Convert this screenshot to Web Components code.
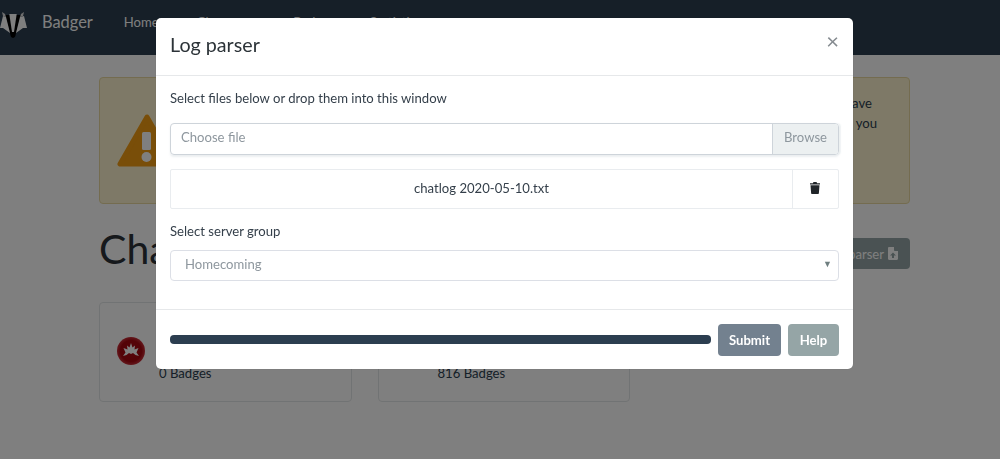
<!DOCTYPE html>
<html>
<head>
<meta charset="utf-8">
<title>Badger</title>
<style>
    html, body { margin: 0; height: 100%; overflow: hidden; background: #fff; }
    body { font-family: Lato, "Liberation Sans", sans-serif; font-size: 13.125px; color: #212529; }
</style>
</head>
<body>
<badger-page></badger-page>
<log-parser-modal></log-parser-modal>

<script>
class BadgerNav extends HTMLElement {
    constructor() {
        super()
        this.attachShadow({ mode: 'open' });
    }
    connectedCallback() {
        this.shadowRoot.innerHTML = `
        <style>
            :host { display: flex; align-items: flex-start; height: 55px; box-sizing: border-box; padding-top: 12px; background: #2c3e50; color: #fff; }
            svg { width: 28px; height: 26px; flex: none; }
            .brand { font-size: 16.4px; line-height: 20px; margin-left: 14px; margin-right: 31px; }
            a { line-height: 20px; color: #fff; margin-right: 40px; }
            a.home { margin-right: 38px; }
            a.short { margin-right: 35px; }
        </style>
        <svg viewBox="0 0 28 26">
            <path fill="#000" d="M5 3h16l-5 18-1 4-2 1-2-1-1-4z"/>
            <path fill="#ddd" d="M2 0l3 2 1 3-3-1z"/>
            <path fill="#ddd" d="M24 0l-3 2-1 3 3-1z"/>
            <path fill="#fff" d="M6 5l4 16-7-5-3 0 3-12z"/>
            <path fill="#fff" d="M20 5l-4 16 7-5 4 0-3-12z"/>
            <path fill="#fff" d="M9.300 2h7.400l-2.700 18h-2z"/>
            <circle cx="13" cy="23" r="2.300" fill="#000"/>
        </svg>
        <span class="brand">Badger</span>
        <a class="home">Home</a><a>Character</a><a class="short">Badges</a><a>Statistics</a>`;
    }
}

class WarnAlert extends HTMLElement {
    constructor() {
        super()
        this.attachShadow({ mode: 'open' });
    }
    connectedCallback() {
        this.shadowRoot.innerHTML = `
        <style>
            :host { display: flex; align-items: flex-start; height: 127px; box-sizing: border-box; padding: 15px 32px 0 17px; background: #fcf3cf; border: 1px solid #e8d9a0; border-radius: 4px; color: #2c3e50; }
            svg { width: 60px; height: 54px; flex: none; margin-top: 21px; }
            p { margin: 0; flex: 1; line-height: 20px; text-align: right; }
            span { padding-right: 5px; }
        </style>
        <svg viewBox="0 0 60 54">
            <path fill="#f39c12" stroke="#f39c12" stroke-width="5" stroke-linejoin="round" d="M30 3L3 50h54z"/>
            <rect x="25" y="18" width="9" height="18" rx="1.500" fill="#fff"/>
            <circle cx="29.500" cy="43" r="5" fill="#fff"/>
        </svg>
        <p><span>have</span><br>you</p>`;
    }
}

class BadgeCard extends HTMLElement {
    constructor() {
        super()
        this.attachShadow({ mode: 'open' });
    }
    connectedCallback() {
        this.shadowRoot.innerHTML = `
        <style>
            :host { display: block; width: 252.5px; height: 100px; box-sizing: border-box; border: 1px solid #e3e6e8; border-radius: 4px; position: relative; color: #2c3e50; }
            .count { position: absolute; top: 60px; left: 59px; line-height: 20px; }
            .icon { position: absolute; left: 17px; top: 34px; }
        </style>
        <div class="icon"><slot name="icon"></slot></div>
        <div class="count"><slot></slot></div>`;
    }
}

class BadgerPage extends HTMLElement {
    constructor() {
        super()
        this.attachShadow({ mode: 'open' });
    }
    connectedCallback() {
        this.shadowRoot.innerHTML = `
        <style>
            :host { display: block; }
            main { padding: 22px 90px 0 99px; }
            .head { display: flex; justify-content: space-between; align-items: center; margin-top: 19px; height: 52px; }
            h1 { margin: 0; font-size: 41px; font-weight: 400; color: #2c3338; line-height: 52px; }
            .parser { display: flex; align-items: center; justify-content: flex-end; gap: 4px; width: 100px; box-sizing: border-box; height: 31px; padding: 0 12px; background: #95a5a6; border-radius: 4px; color: #fff; margin-top: 9px; }
            .cards { display: flex; gap: 26px; margin-top: 27px; }
            svg { display: block; }
        </style>
        <badger-nav></badger-nav>
        <main>
            <warn-alert></warn-alert>
            <div class="head">
                <h1>Cha</h1>
                <div class="parser">parser
                    <svg width="10" height="13" viewBox="0 0 10 13"><path fill="#fff" d="M0 1.200C0 .5.500 0 1.200 0H6v3.200c0 .5.4.8.8.8H10v7.800c0 .7-.5 1.200-1.200 1.200H1.200C.5 13 0 12.500 0 11.800z"/><path fill="#95a5a6" d="M5 5.500l3 3H6v2.500H4V8.500H2z"/></svg>
                </div>
            </div>
            <div class="cards">
                <badge-card>
                    <svg slot="icon" width="28" height="28" viewBox="0 0 28 28">
                        <defs><radialGradient id="red"><stop offset="0" stop-color="#aa0a14"/><stop offset=".75" stop-color="#a8060f"/><stop offset="1" stop-color="#c8303a"/></radialGradient></defs>
                        <circle cx="14" cy="14" r="14" fill="url(#red)"/>
                        <path fill="#fff" d="M14 6l1.500 4.500 2.500-2-.5 4 4-1.500-2 4.500 2.500 3.500-3.500-1-2.500-2-2 1-2-1-2.500 2-3.500 1 2.500-3.500-2-4.500 4 1.500-.5-4 2.500 2z"/>
                    </svg>
                    0 Badges
                </badge-card>
                <badge-card>816 Badges</badge-card>
            </div>
        </main>`;
    }
}

class LogParserModal extends HTMLElement {
    constructor() {
        super()
        this.attachShadow({ mode: 'open' });
    }
    connectedCallback() {
        this.shadowRoot.innerHTML = `
        <style>
            :host { position: fixed; inset: 0; background: rgba(0,0,0,.5); display: block; color: #343f4a; }
            .dialog { position: absolute; left: 156px; top: 18px; width: 697px; height: 351px; background: #fff; border-radius: 5px; display: flex; flex-direction: column; box-shadow: 0 0 1px rgba(0,0,0,.3); }
            header { height: 58px; box-sizing: border-box; flex: none; display: flex; align-items: flex-start; justify-content: space-between; padding: 14px 14px 0; border-bottom: 1px solid #e6e8ea; }
            h5 { margin: 0; font-size: 19.7px; font-weight: 400; line-height: 26px; color: #2c3338; }
            .close { font-size: 22px; color: #858b90; line-height: 18px; margin-top: 0; }
            .body { flex: 1; padding: 12px 14px 0; display: flex; flex-direction: column; }
            label { line-height: 20px; display: block; }
            .file { display: flex; height: 32px; box-sizing: border-box; margin-top: 15px; border: 1px solid #ced4da; border-radius: 4px; box-shadow: 0 2px 2px rgba(200,210,215,.35), 2px 0 1px rgba(200,210,215,.25); overflow: hidden; }
            .file span { flex: 1; padding-left: 10px; line-height: 27px; color: #8e979e; }
            .file b { font-weight: 400; width: 65px; background: #ecf0f1; border-left: 1px solid #ced4da; text-align: center; line-height: 27px; color: #8e979e; }
            .item { display: flex; height: 40px; box-sizing: border-box; margin-top: 14px; border: 1px solid #e9ecef; border-radius: 2px; }
            .item span { flex: 1; text-align: center; line-height: 36px; }
            .item i { width: 46px; box-sizing: border-box; padding: 0 1px 2px 0; border-left: 1px solid #e9ecef; display: flex; align-items: center; justify-content: center; }
            .group { margin-top: 12px; }
            .select { height: 31px; box-sizing: border-box; margin-top: 9px; border: 1px solid #dcdfe6; border-radius: 4px; display: flex; align-items: center; justify-content: space-between; padding: 0 6px 4px 14px; color: #8e979e; }
            .select em { font-style: normal; font-size: 9px; color: #6f7f80; }
            footer { height: 60px; box-sizing: border-box; flex: none; border-top: 1px solid #e6e8ea; display: flex; align-items: center; padding: 0 14px; gap: 7px; }
            .bar { flex: 1; height: 9px; background: #2c3e50; border-radius: 4px; }
            button { font: inherit; font-weight: 700; border: 0; height: 32px; border-radius: 4px; color: #fff; padding: 0; }
            .submit { width: 63px; background: #73818f; }
            .help { width: 51px; background: #95a5a6; }
        </style>
        <div class="dialog">
            <header><h5>Log parser</h5><span class="close">&times;</span></header>
            <div class="body">
                <label>Select files below or drop them into this window</label>
                <div class="file"><span>Choose file</span><b>Browse</b></div>
                <div class="item"><span>chatlog 2020-05-10.txt</span>
                    <i><svg width="10" height="12" viewBox="0 0 10 12"><path fill="#212529" d="M0 1.200h3l.4-1.200h3.200l.4 1.200h3v1.300H0zM.5 3.300h9l-.6 7.700c0 .6-.5 1-1 1H2.100c-.5 0-1-.4-1-1z"/></svg></i>
                </div>
                <label class="group">Select server group</label>
                <div class="select"><span>Homecoming</span><em>&#9660;</em></div>
            </div>
            <footer><div class="bar"></div><button class="submit">Submit</button><button class="help">Help</button></footer>
        </div>`;
    }
}

window.customElements.define('badger-nav', BadgerNav);
window.customElements.define('warn-alert', WarnAlert);
window.customElements.define('badge-card', BadgeCard);
window.customElements.define('badger-page', BadgerPage);
window.customElements.define('log-parser-modal', LogParserModal);
</script>
</body>
</html>
